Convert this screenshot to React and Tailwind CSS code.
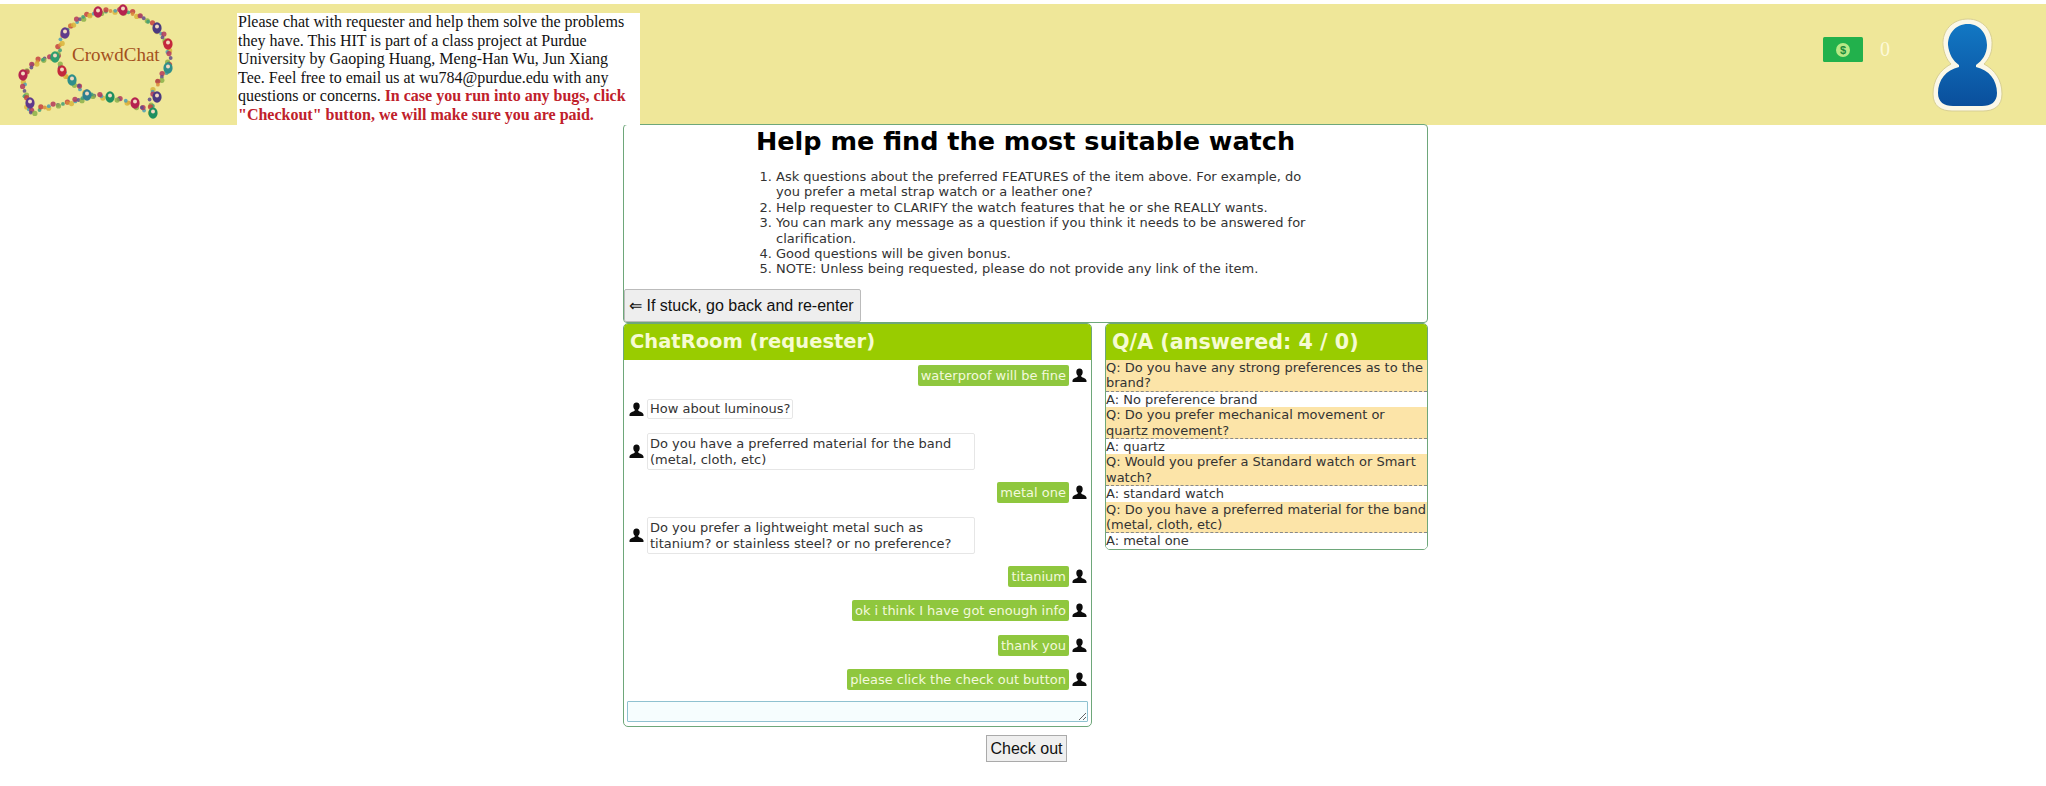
import React from 'react';

const DOT_COLORS = ['#b3365b', '#3f9e78', '#d9b43c', '#5f4b8b', '#c44040', '#4a9fb5', '#8bb04a', '#d98a3a'];

// smooth a rough outline a little, then drop a dot every few pixels along it
const smooth = (points) => {
  const out = [points[0]];
  for (let i = 0; i < points.length - 1; i++) {
    const [x1, y1] = points[i];
    const [x2, y2] = points[i + 1];
    out.push([x1 * 0.75 + x2 * 0.25, y1 * 0.75 + y2 * 0.25]);
    out.push([x1 * 0.25 + x2 * 0.75, y1 * 0.25 + y2 * 0.75]);
  }
  out.push(points[points.length - 1]);
  return out;
};

const dotsAlong = (points, step) => {
  const dots = [];
  for (let i = 0; i < points.length - 1; i++) {
    const [x1, y1] = points[i];
    const [x2, y2] = points[i + 1];
    const len = Math.hypot(x2 - x1, y2 - y1);
    const n = Math.max(1, Math.round(len / step));
    for (let j = 0; j < n; j++) {
      dots.push([x1 + ((x2 - x1) * j) / n, y1 + ((y2 - y1) * j) / n]);
    }
  }
  return dots;
};

const upperBubble = smooth(smooth([
  [57, 57], [63, 33], [80, 18], [98, 12], [123, 10], [145, 18], [157, 28], [168, 43], [170, 67], [157, 83], [150, 97], [153, 115],
  [133, 103], [110, 97], [87, 95], [72, 80], [62, 72], [57, 57],
]));
const lowerBubble = smooth(smooth([
  [55, 57], [37, 60], [23, 75], [24, 90], [27, 100], [30, 115], [43, 107], [70, 103], [87, 97],
]));

const bigDots = [
  [65, 33, '#5f3a8c'], [98, 12, '#b5234f'], [123, 10, '#b5234f'], [157, 28, '#4b3a80'], [168, 44, '#c4283c'], [168, 68, '#2f8f8a'],
  [62, 71, '#c4283c'], [55, 57, '#2f9e6e'], [23, 75, '#b5234f'], [72, 80, '#2f8f8a'], [87, 95, '#2f7f8f'], [110, 97, '#1f8f5f'],
  [157, 97, '#4b3a80'], [153, 113, '#1f8f5f'], [30, 103, '#5f3a8c'], [135, 103, '#b5234f'],
];

const Logo = () => {
  const dots = [...dotsAlong(upperBubble, 3), ...dotsAlong(lowerBubble, 3)];
  return (
    <div className="relative w-[160px] h-[121px] ml-[17px]">
      <svg width="160" height="121" viewBox="17 4 160 121">
        {dots.map(([x, y], i) => (
          <circle
            key={i}
            cx={x + (i % 3 === 0 ? 1.4 : i % 3 === 1 ? -1.4 : 0)}
            cy={y + (i % 4 === 0 ? -1.4 : i % 4 === 2 ? 1.4 : 0)}
            r={i % 2 === 0 ? 2.6 : 1.9}
            fill={DOT_COLORS[(i * 3) % DOT_COLORS.length]}
            opacity="0.85"
          />
        ))}
        {bigDots.map(([x, y, c], i) => (
          <g key={i}>
            <ellipse cx={x} cy={y} rx="4.6" ry="5.8" fill={c} />
            <circle cx={x} cy={y - 1.6} r="2" fill="#f3d9c0" />
          </g>
        ))}
      </svg>
      <span className="absolute left-[55px] top-[39px] font-['Liberation_Serif',serif] text-[19px] leading-[24px] text-[#a4501c]">
        CrowdChat
      </span>
    </div>
  );
};

const CashIcon = () => (
  <svg width="40" height="25" viewBox="0 0 40 25">
    <rect width="40" height="25" rx="1.5" fill="#22b14c" />
    <circle cx="20" cy="13" r="7" fill="#b8e986" />
    <text x="20" y="17" textAnchor="middle" fontSize="11" fontWeight="bold" fontFamily="Liberation Sans" fill="#1c8c3c">$</text>
  </svg>
);

const Avatar = () => (
  <svg width="71" height="95" viewBox="0 0 71 95">
    <defs>
      <linearGradient id="av" x1="0" y1="0" x2="0" y2="1">
        <stop offset="0" stopColor="#1278c4" />
        <stop offset="1" stopColor="#0a4f9c" />
      </linearGradient>
    </defs>
    <path
      d="M36 1C20 1 10 13 11 27C12 36 15 42 19 46C8 52 1 62 1 76C1 88 9 93 20 93H51C62 93 70 88 70 76C70 62 63 52 52 46C56 42 60 36 60 27C61 13 51 1 36 1Z"
      fill="#fbf8e8"
      stroke="#d8cf94"
      strokeWidth="1"
    />
    <path
      d="M36 6C23 6 16 16 16 27C17 36 21 43 27 47V49C14 52 6 62 6 75C6 84 12 88 21 88H50C59 88 65 84 65 75C65 62 57 52 44 49V47C50 43 55 36 55 27C55 16 48 6 36 6Z"
      fill="url(#av)"
    />
  </svg>
);

const PersonIcon = () => (
  <svg width="15" height="15" viewBox="0 0 15 15" className="shrink-0">
    <path d="M7.5 0.5C5.3 0.5 4.2 2.2 4.3 4.2C4.4 6 5.1 7.2 6 8C5.6 9.6 1.4 9.7 0.5 12.5V14H14.5V12.5C13.6 9.7 9.4 9.6 9 8C9.9 7.2 10.6 6 10.7 4.2C10.8 2.2 9.7 0.5 7.5 0.5Z" fill="#0c0c0c" />
  </svg>
);

const steps = [
  'Ask questions about the preferred FEATURES of the item above. For example, do you prefer a metal strap watch or a leather one?',
  'Help requester to CLARIFY the watch features that he or she REALLY wants.',
  'You can mark any message as a question if you think it needs to be answered for clarification.',
  'Good questions will be given bonus.',
  'NOTE: Unless being requested, please do not provide any link of the item.',
];

const messages = [
  { mine: true, text: 'waterproof will be fine', mt: 'mt-[5px]' },
  { mine: false, text: 'How about luminous?', mt: 'mt-[13px]' },
  { mine: false, text: 'Do you have a preferred material for the band (metal, cloth, etc)', mt: 'mt-[14px]', wide: true },
  { mine: true, text: 'metal one', mt: 'mt-[12px]' },
  { mine: false, text: 'Do you prefer a lightweight metal such as titanium? or stainless steel? or no preference?', mt: 'mt-[14px]', wide: true },
  { mine: true, text: 'titanium', mt: 'mt-[12px]' },
  { mine: true, text: 'ok i think I have got enough info', mt: 'mt-[13px]' },
  { mine: true, text: 'thank you', mt: 'mt-[14px]' },
  { mine: true, text: 'please click the check out button', mt: 'mt-[13px]' },
];

const qa = [
  ['Q: Do you have any strong preferences as to the brand?', 'A: No preference brand'],
  ['Q: Do you prefer mechanical movement or quartz movement?', 'A: quartz'],
  ['Q: Would you prefer a Standard watch or Smart watch?', 'A: standard watch'],
  ['Q: Do you have a preferred material for the band (metal, cloth, etc)', 'A: metal one'],
];

const Message = ({ mine, text, mt, wide }) => {
  if (mine) {
    return (
      <div className={`flex justify-end items-center gap-[3px] pr-[4px] ${mt}`}>
        <div className="bg-[#8fc73e] text-[#f3f9dc] rounded-[2px] px-[3px] h-[21px] leading-[21px] whitespace-nowrap">{text}</div>
        <PersonIcon />
      </div>
    );
  }
  return (
    <div className={`flex items-center gap-[3px] pl-[5px] ${mt}`}>
      <PersonIcon />
      <div className={`bg-white border border-[#e6e6e6] text-[#333] rounded-[2px] px-[2px] leading-[16px] ${wide ? 'w-[328px] py-[1.5px]' : 'whitespace-nowrap py-[1px]'}`}>
        {text}
      </div>
    </div>
  );
};

export default function App() {
  return (
    <div className="min-h-[786px] bg-white pt-[4px] font-['DejaVu_Sans',sans-serif]">
      {/* Top bar */}
      <div className="h-[121px] bg-[#efe799] flex items-stretch">
        <Logo />
        <div className="w-[403px] ml-[60px] mt-[9px] bg-white pl-[1px] pr-[5px] font-['Liberation_Serif',serif] text-[16px] leading-[18.5px] text-[#111]">
          Please chat with requester and help them solve the problems they have. This HIT is part of a class project at Purdue University by Gaoping Huang, Meng-Han Wu, Jun Xiang Tee. Feel free to email us at wu784@purdue.edu with any questions or concerns.{' '}
          <b className="text-[#c0202a]">In case you run into any bugs, click "Checkout" button, we will make sure you are paid.</b>
        </div>
        <div className="ml-auto flex items-start">
          <div className="mt-[33px]"><CashIcon /></div>
          <div className="mt-[33px] ml-[17px] w-[10px] text-[#fdf9d8] text-[20px] leading-[25px] font-['Liberation_Serif',serif]">0</div>
          <div className="mt-[14px] ml-[42px] mr-[43px]"><Avatar /></div>
        </div>
      </div>

      <div className="w-[805px] ml-[623px] -mt-[1px]">
        {/* Instructions */}
        <div className="h-[199px] bg-white border border-[#6ea77a] rounded-[4px] flex flex-col">
          <h1 className="text-center font-bold text-[25.5px] leading-[33px] text-black">Help me find the most suitable watch</h1>
          <ol className="list-decimal w-[565px] ml-[131px] pl-[21px] mt-[11px] text-[13px] leading-[15.4px] text-[#333]">
            {steps.map((step) => (
              <li key={step}>{step}</li>
            ))}
          </ol>
          <button className="mt-auto w-[237px] h-[33px] bg-[#eeeeee] border border-[#bbb] rounded-[2px] text-left pl-[4px] font-['Liberation_Sans',sans-serif] text-[16px] text-[#111] whitespace-nowrap">
            ⇐ If stuck, go back and re-enter
          </button>
        </div>

        <div className="flex items-start gap-[13px]">
          {/* Chat */}
          <div className="w-[469px]">
            <div className="h-[404px] border border-[#6ea77a] rounded-[5px] overflow-hidden flex flex-col">
              <div className="h-[36px] bg-[#99cc00] text-[#f6fbd2] font-bold text-[19.5px] leading-[36px] pl-[6px]">ChatRoom (requester)</div>
              <div className="flex-1 text-[13px]">
                {messages.map((m) => (
                  <Message key={m.text} {...m} />
                ))}
              </div>
              <textarea className="block mx-[3px] mb-[4px] h-[21px] border border-[#8fc1d0] bg-[#f6fdfe] rounded-[1px]" />
            </div>
            <div className="flex justify-end pr-[25px] mt-[8px]">
              <button className="w-[81px] h-[27px] bg-[#efefef] border border-[#aaa] font-['Liberation_Sans',sans-serif] text-[16px] text-[#111]">Check out</button>
            </div>
          </div>

          {/* Q/A */}
          <div className="w-[323px] border border-[#6ea77a] rounded-[5px] overflow-hidden">
            <div className="h-[36px] bg-[#99cc00] text-[#f6fbd2] font-bold text-[20.7px] leading-[36px] pl-[6px]">Q/A (answered: 4 / 0)</div>
            <div className="text-[13px] leading-[15.4px] text-[#333]">
              {qa.map(([q, a]) => (
                <div key={q}>
                  <div className="bg-[#fce4a8] border-b border-dashed border-[#888]">{q}</div>
                  <div className="bg-white border-b border-dashed border-[#888] last:border-b-0">{a}</div>
                </div>
              ))}
            </div>
          </div>
        </div>
      </div>
    </div>
  );
}
